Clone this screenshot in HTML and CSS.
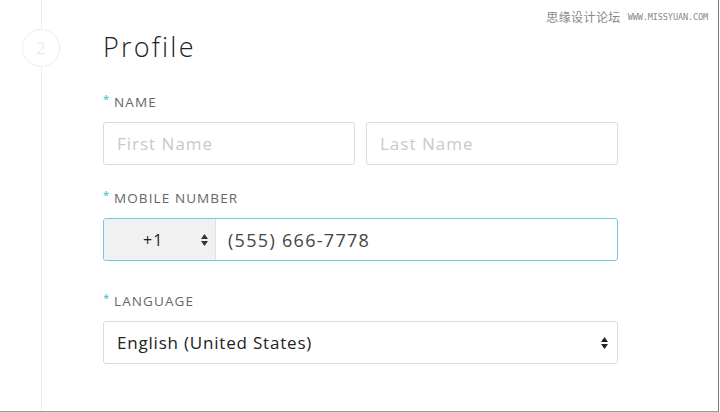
FILE: index.html
```html
<!DOCTYPE html>
<html>
<head>
<meta charset="utf-8">
<link rel="stylesheet" href="styles.css">
</head>
<body>
<div class="frame">
  <div class="rail">
    <div class="step">2</div>
  </div>
  <div class="content">
    <h1 class="title">Profile</h1>
    <div class="field field-name">
      <div class="label"><span class="req">*</span>NAME</div>
      <div class="row">
        <div class="input placeholder">First Name</div>
        <div class="input placeholder">Last Name</div>
      </div>
    </div>
    <div class="field field-mobile">
      <div class="label"><span class="req">*</span>MOBILE NUMBER</div>
      <div class="phone">
        <div class="country"><span class="code">+1</span><span class="arrows">
          <svg width="7" height="12" viewBox="0 0 7 12"><path d="M3.5 0L7 5H0z M3.5 12L0 7h7z" fill="#333"/></svg>
        </span></div>
        <div class="number">(555) 666-7778</div>
      </div>
    </div>
    <div class="field field-lang">
      <div class="label"><span class="req">*</span>LANGUAGE</div>
      <div class="input select"><span>English (United States)</span>
        <svg width="7" height="12" viewBox="0 0 7 12"><path d="M3.5 0L7 5H0z M3.5 12L0 7h7z" fill="#222"/></svg>
      </div>
    </div>
  </div>
  <div class="watermark"><span class="cn">思缘设计论坛</span><span class="url">WWW.MISSYUAN.COM</span></div>
</div>
</body>
</html>
```
FILE: styles.css
```css
* { box-sizing: border-box; }
html, body { margin: 0; padding: 0; background: #fff; }
.frame {
  position: relative;
  width: 719px;
  height: 412px;
  border-right: 1px solid #7a7a7a;
  border-bottom: 1px solid #9a9a9a;
  display: flex;
  font-family: "Open Sans", "Noto Sans", sans-serif;
  overflow: hidden;
}
.rail {
  width: 82px;
  flex: none;
  display: flex;
  justify-content: center;
  background: linear-gradient(#ececec, #ececec) no-repeat center / 1px 100%;
}
.step {
  margin-top: 29px;
  width: 38px;
  height: 38px;
  border-radius: 50%;
  border: 1px solid #eeeeee;
  background: #fff;
  color: #e2e2e2;
  font-size: 16px;
  font-weight: 300;
  display: flex;
  align-items: center;
  justify-content: center;
}
.content {
  margin-left: 21px;
  width: 515px;
  padding-top: 28px;
}
.title {
  margin: 0;
  font-size: 27px;
  font-weight: 300;
  letter-spacing: 2.2px;
  color: #222;
  line-height: 38px;
}
.field-name { margin-top: 28px; }
.field-mobile { margin-top: 25px; }
.field-lang { margin-top: 32px; }
.label {
  position: relative;
  padding-left: 11px;
  font-size: 13.5px;
  letter-spacing: 1.1px;
  color: #666;
  line-height: 16px;
  margin-bottom: 12px;
}
.req {
  position: absolute;
  left: 0;
  top: -3px;
  color: #2bb7d6;
  font-size: 11px;
}
.row { display: flex; gap: 11px; }
.row .input { flex: 1; }
.input {
  height: 43px;
  border: 1px solid #dcdcdc;
  border-radius: 3px;
  padding: 0 13px;
  display: flex;
  align-items: center;
  font-size: 17px;
  color: #222;
}
.placeholder { color: #c9c9c9; letter-spacing: 1px; }
.phone {
  height: 43px;
  border: 1px solid #6fcbe2;
  border-radius: 3px;
  display: flex;
  overflow: hidden;
}
.country {
  width: 112px;
  background: #f1f1f1;
  border-right: 1px solid #e0e0e0;
  display: flex;
  align-items: center;
  padding-left: 39px;
  padding-right: 7px;
  justify-content: space-between;
  font-size: 16px;
  letter-spacing: 1px;
  color: #222;
}
.arrows { display: flex; }
.number {
  display: flex;
  align-items: center;
  padding-left: 12px;
  font-size: 18px;
  color: #444;
  letter-spacing: 1.3px;
}
.select { justify-content: space-between; padding-right: 9px; }
.select span { letter-spacing: 0.8px; }
.watermark {
  position: absolute;
  right: 10px;
  top: 8px;
  display: flex;
  align-items: center;
  gap: 7px;
  color: #888;
}
.cn { font-family: "Noto Sans CJK SC", sans-serif; font-size: 12px; letter-spacing: 0.4px; }
.url { font-family: "DejaVu Sans Mono", monospace; font-size: 8.5px; letter-spacing: -0.1px; }
```
